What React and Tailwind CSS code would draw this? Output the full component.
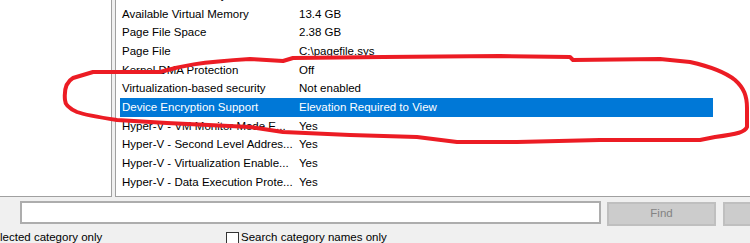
import React from 'react'

const rows = [
  { name: 'Total Virtual Memory', value: '15.9 GB' },
  { name: 'Available Virtual Memory', value: '13.4 GB' },
  { name: 'Page File Space', value: '2.38 GB' },
  { name: 'Page File', value: 'C:\\pagefile.sys' },
  { name: 'Kernel DMA Protection', value: 'Off' },
  { name: 'Virtualization-based security', value: 'Not enabled' },
  { name: 'Device Encryption Support', value: 'Elevation Required to View', selected: true },
  { name: 'Hyper-V - VM Monitor Mode E...', value: 'Yes' },
  { name: 'Hyper-V - Second Level Addres...', value: 'Yes' },
  { name: 'Hyper-V - Virtualization Enable...', value: 'Yes' },
  { name: 'Hyper-V - Data Execution Prote...', value: 'Yes' },
]

export default function App() {
  return (
    <div className="relative w-[750px] h-[243px] overflow-hidden bg-[#f0f0f0] text-[11.5px] text-black font-['Liberation_Sans',Arial,sans-serif]">
      {/* panes */}
      <div className="flex h-[197px]">
        <div className="w-[112px] bg-white border-r border-b border-[#a0a0a0]" />
        <div className="w-[3px]" />
        <div className="flex-1 bg-white border-l border-b border-[#a0a0a0] overflow-hidden">
          <div className="mt-[-14px] pl-[4px]">
            {rows.map((r, i) => (
              <div
                key={i}
                className={`flex w-[593px] h-[18.67px] leading-[18.67px] whitespace-nowrap ${r.selected ? 'bg-[#0078d7] text-white' : ''}`}
              >
                <span className="w-[179px] pl-[2px] overflow-hidden">{r.name}</span>
                <span>{r.value}</span>
              </div>
            ))}
          </div>
        </div>
      </div>

      {/* search bar */}
      <div className="flex items-start pl-[20px] pt-[4px]">
        <div className="w-[581px] h-[23px] bg-white border-2 border-[#adadad] shrink-0" />
        <button className="ml-[6px] mt-[1px] w-[109px] h-[24px] bg-[#cccccc] border-2 border-[#bfbfbf] text-[#838383] shrink-0">
          Find
        </button>
        <button className="ml-[7px] mt-[1px] w-[80px] h-[24px] bg-[#cccccc] border-2 border-[#bfbfbf] shrink-0" />
      </div>

      <div className="flex items-center h-[18px] mt-[3px] whitespace-nowrap">
        <span className="w-[226px]">lected category only</span>
        <span className="w-[13px] h-[13px] border border-[#333] bg-white" />
        <span className="ml-[2px]">Search category names only</span>
      </div>

      {/* red marker loop */}
      <svg className="absolute inset-0 pointer-events-none" width="750" height="243" viewBox="0 0 750 243">
        <path
          d="M65,100 C64,90 66,82 73,78 L93,72 L160,72 C180,66 200,62 250,59 L283,61 L293,58 L383,57 L500,56 L570,57 L573,60 L660,59 L690,62 C708,66 725,72 735,80 C744,88 747,96 747,108 L747,127 C745,132 738,134 715,137 L700,140 L600,140 L517,142 L457,142 L417,137 L350,135 L283,132 L250,127 L167,123 L117,120 C97,117 85,115 77,112 C68,108 65,104 65,100 Z"
          fill="none"
          stroke="#ec1c24"
          strokeWidth="4"
          strokeLinejoin="round"
        />
      </svg>
    </div>
  )
}
